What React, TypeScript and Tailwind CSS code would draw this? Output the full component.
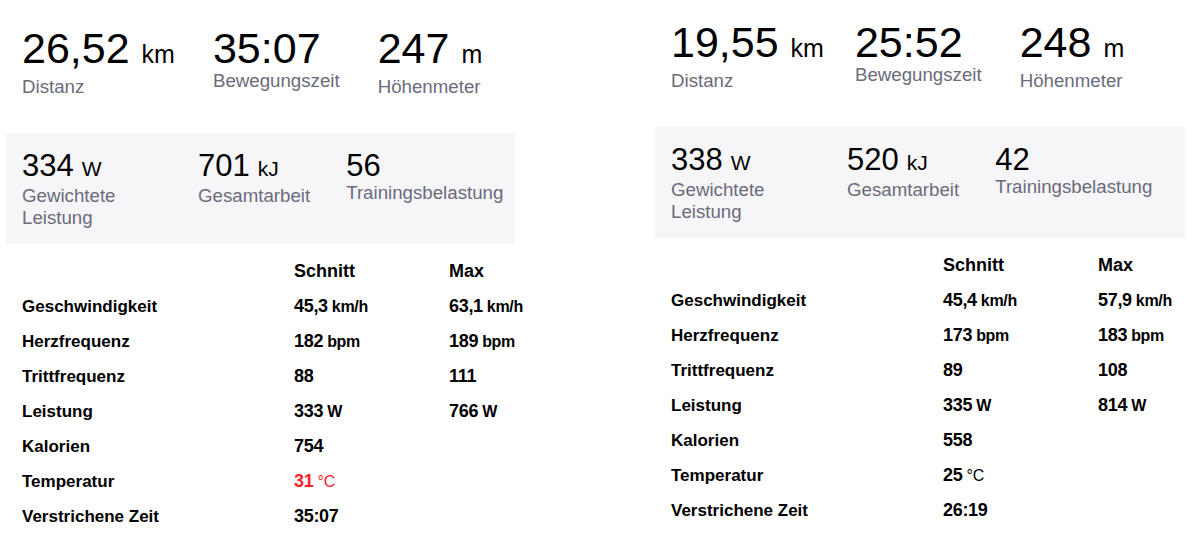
import React from "react";

type Big = { value: string; unit?: string; label: string };
type Row = { label: string; avg?: [string, string?]; max?: [string, string?]; hot?: boolean; thin?: boolean };

type Activity = {
  top: Big[];
  box: Big[];
  rows: Row[];
  offset: string;
  width: string;
  firstGap: string;
};

const activities: Activity[] = [
  {
    offset: "pt-[27px]",
    width: "w-[509px]",
    firstGap: "mr-0",
    top: [
      { value: "26,52", unit: "km", label: "Distanz" },
      { value: "35:07", label: "Bewegungszeit" },
      { value: "247", unit: "m", label: "Höhenmeter" },
    ],
    box: [
      { value: "334", unit: "W", label: "Gewichtete Leistung" },
      { value: "701", unit: "kJ", label: "Gesamtarbeit" },
      { value: "56", label: "Trainingsbelastung" },
    ],
    rows: [
      { label: "Geschwindigkeit", avg: ["45,3", "km/h"], max: ["63,1", "km/h"] },
      { label: "Herzfrequenz", avg: ["182", "bpm"], max: ["189", "bpm"] },
      { label: "Trittfrequenz", avg: ["88"], max: ["111"] },
      { label: "Leistung", avg: ["333", "W"], max: ["766", "W"] },
      { label: "Kalorien", avg: ["754"] },
      { label: "Temperatur", avg: ["31", "°C"], hot: true, thin: true },
      { label: "Verstrichene Zeit", avg: ["35:07"] },
    ],
  },
  {
    offset: "pt-[21px]",
    width: "w-[530px]",
    // the narrow "1" of the original face makes this column a bit tighter
    firstGap: "mr-[-7px]",
    top: [
      { value: "19,55", unit: "km", label: "Distanz" },
      { value: "25:52", label: "Bewegungszeit" },
      { value: "248", unit: "m", label: "Höhenmeter" },
    ],
    box: [
      { value: "338", unit: "W", label: "Gewichtete Leistung" },
      { value: "520", unit: "kJ", label: "Gesamtarbeit" },
      { value: "42", label: "Trainingsbelastung" },
    ],
    rows: [
      { label: "Geschwindigkeit", avg: ["45,4", "km/h"], max: ["57,9", "km/h"] },
      { label: "Herzfrequenz", avg: ["173", "bpm"], max: ["183", "bpm"] },
      { label: "Trittfrequenz", avg: ["89"], max: ["108"] },
      { label: "Leistung", avg: ["335", "W"], max: ["814", "W"] },
      { label: "Kalorien", avg: ["558"] },
      { label: "Temperatur", avg: ["25", "°C"], thin: true },
      { label: "Verstrichene Zeit", avg: ["26:19"] },
    ],
  },
];

function TopStat({ stat, className = "" }: { stat: Big; className?: string }) {
  return (
    <div className={`flex flex-col ${className}`}>
      <div className="whitespace-nowrap text-[43px] leading-[42px] text-black">
        {stat.value}
        {stat.unit && <span className="ml-3 text-[25px]">{stat.unit}</span>}
      </div>
      <div className="text-[18.7px] leading-6 text-[#6b6b7b]">{stat.label}</div>
    </div>
  );
}

function BoxStat({ stat, first }: { stat: Big; first?: boolean }) {
  return (
    <div className={first ? "flex w-[140px] shrink-0 flex-col" : "flex flex-col"}>
      <div className="whitespace-nowrap text-[31px] leading-8 text-black">
        {stat.value}
        {stat.unit && <span className="ml-2 text-[21px]">{stat.unit}</span>}
      </div>
      <div className="text-[18.7px] leading-[22px] text-[#6b6b7b]">{stat.label}</div>
    </div>
  );
}

function Cell({ v, hot, thin }: { v?: [string, string?]; hot?: boolean; thin?: boolean }) {
  if (!v) return <div />;
  return (
    <div className={hot ? "whitespace-nowrap text-[#ff1f2a]" : "whitespace-nowrap text-black"}>
      <span className="text-[18px] font-bold tracking-[-0.3px]">{v[0]}</span>
      {v[1] && (
        <span className={thin ? "ml-1 text-[16px] font-normal" : "ml-1 text-[16px] font-bold tracking-[-0.3px]"}>
          {v[1]}
        </span>
      )}
    </div>
  );
}

function Panel({ a }: { a: Activity }) {
  return (
    <div className={`${a.width} ${a.offset} shrink-0`}>
      <div className="flex gap-[38px] px-4">
        {a.top.map((s, i) => (
          <TopStat key={s.label} stat={s} className={i === 0 ? a.firstGap : ""} />
        ))}
      </div>
      <div className="mt-[34px] flex gap-9 bg-[#f6f6f8] px-4 pb-[15px] pt-[17px]">
        {a.box.map((s, i) => (
          <BoxStat key={s.label} stat={s} first={i === 0} />
        ))}
      </div>
      <div className="mt-[10px] grid grid-cols-[272px_155px_1fr] px-4 leading-[35px] text-black">
        <div />
        <div className="text-[18px] font-bold">Schnitt</div>
        <div className="text-[18px] font-bold">Max</div>
        {a.rows.map((r) => (
          <React.Fragment key={r.label}>
            <div className="text-[17px] font-bold">{r.label}</div>
            <Cell v={r.avg} hot={r.hot} thin={r.thin} />
            <Cell v={r.max} />
          </React.Fragment>
        ))}
      </div>
    </div>
  );
}

export default function App() {
  return (
    <div className="flex h-[539px] w-[1202px] gap-[140px] bg-white pl-[6px] font-['Liberation_Sans',Arial,sans-serif]">
      {activities.map((a, i) => (
        <Panel key={i} a={a} />
      ))}
    </div>
  );
}
